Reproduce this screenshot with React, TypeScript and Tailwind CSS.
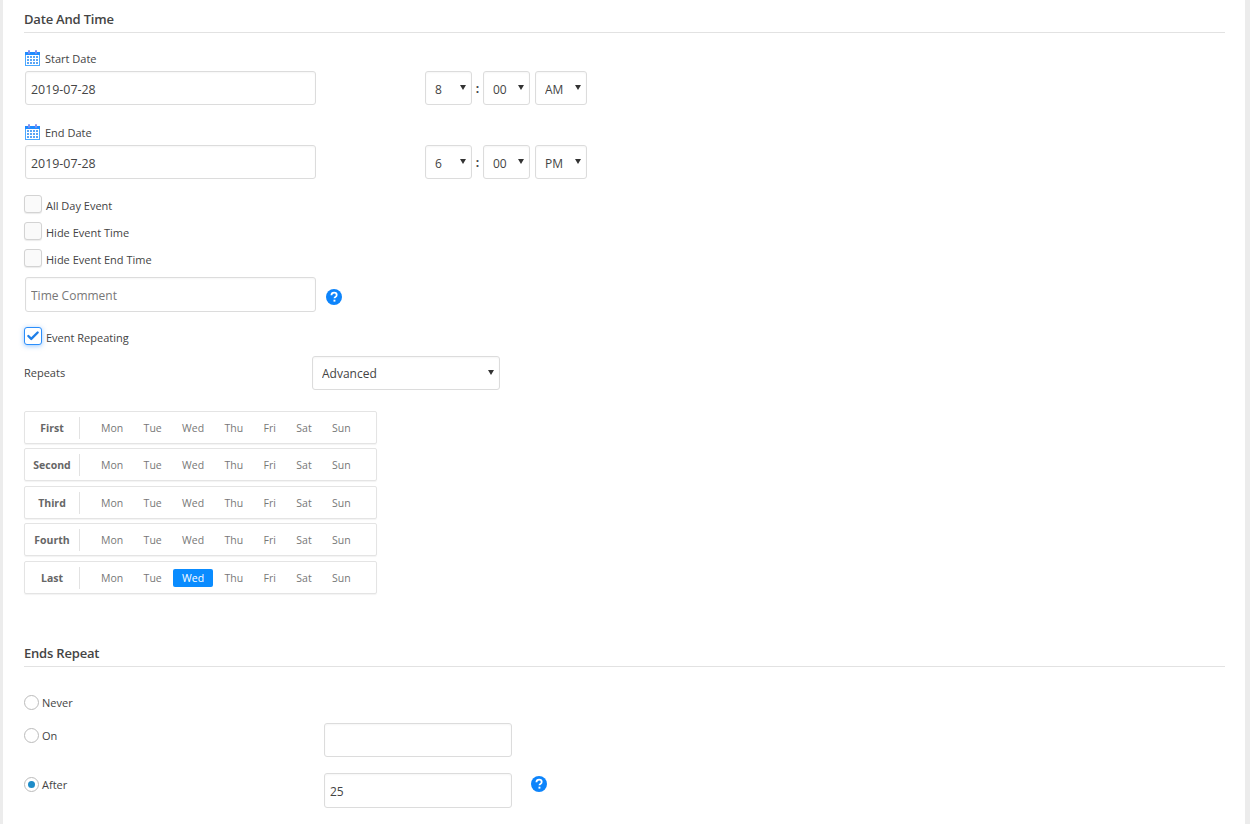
import { Check } from 'lucide-react';

const DAYS = ['Mon', 'Tue', 'Wed', 'Thu', 'Fri', 'Sat', 'Sun'];
const WEEKS = ['First', 'Second', 'Third', 'Fourth', 'Last'];

function CalendarIcon(): React.JSX.Element {
  return (
    <svg width="15" height="16" viewBox="0 0 15 16" className="shrink-0">
      <rect x="0.5" y="2.5" width="14" height="13" fill="#fff" stroke="#4aa8ff" />
      <rect x="0" y="2" width="15" height="3" fill="#1f8bff" />
      <rect x="3" y="0" width="2" height="4" rx="1" fill="#7f8ff0" />
      <rect x="10" y="0" width="2" height="4" rx="1" fill="#7f8ff0" />
      <path d="M2 6h2v2H2zM5 6h2v2H5zM8 6h2v2H8zM11 6h2v2h-2zM2 9h2v2H2zM5 9h2v2H5zM8 9h2v2H8zM11 9h2v2h-2zM2 12h2v2H2zM5 12h2v2H5zM8 12h2v2H8zM11 12h2v2h-2z" fill="#5aa5f5" />
    </svg>
  );
}

function HelpIcon(): React.JSX.Element {
  return (
    <svg width="16" height="16" viewBox="0 0 16 16" className="shrink-0">
      <circle cx="8" cy="8" r="8" fill="#0d84fb" />
      <path d="M5.4 6.2c.1-1.6 1.2-2.5 2.7-2.5s2.6.9 2.6 2.2c0 1-.5 1.5-1.3 2-.7.5-.9.7-.9 1.4" fill="none" stroke="#fff" strokeWidth="1.8" />
      <rect x="7.5" y="10.7" width="1.9" height="1.9" fill="#fff" />
    </svg>
  );
}

function Heading({ label }: { label: string }): React.JSX.Element {
  return (
    <h2 className="h-[33px] border-b border-[#e2e2e2] pt-[10px] text-[13px] leading-[18px] font-semibold tracking-[-0.015em] text-[#444]">
      {label}
    </h2>
  );
}

function TextInput({ value, placeholder, className }: { value?: string; placeholder?: string; className?: string }): React.JSX.Element {
  return (
    <input
      type="text"
      readOnly
      value={value ?? ''}
      placeholder={placeholder}
      className={`rounded-[3px] border border-[#dcdcdc] bg-white px-[5px] pt-[2px] text-xs text-[#444] shadow-[inset_0_1px_2px_rgba(0,0,0,0.04)] outline-none placeholder:text-[#777] ${className ?? ''}`}
    />
  );
}

function SelectBox({ value, className, selectClass = 'pt-[3px]' }: { value: string; className?: string; selectClass?: string }): React.JSX.Element {
  return (
    <div className={`relative h-[34px] rounded-[3px] border border-[#dcdcdc] bg-white shadow-[inset_0_1px_2px_rgba(0,0,0,0.04)] ${className ?? ''}`}>
      <select
        defaultValue={value}
        className={`h-full w-full appearance-none bg-transparent pl-[9px] text-xs text-[#444] outline-none ${selectClass}`}
      >
        <option>{value}</option>
      </select>
      <svg width="6" height="5" viewBox="0 0 6 5" className="pointer-events-none absolute top-[13px] right-[5px]">
        <path d="M0 0h6L3 5z" fill="#333" />
      </svg>
    </div>
  );
}

function DateField({ label, date, hour, ampm }: { label: string; date: string; hour: string; ampm: string }): React.JSX.Element {
  return (
    <div>
      <div className="flex h-[16px] items-center gap-[5px] pl-[1px] text-[11px] text-[#444]">
        <CalendarIcon />
        <span className="pt-[2px]">{label}</span>
      </div>
      <div className="mt-[5px] flex items-center pl-[1px]">
        <TextInput value={date} className="h-[34px] w-[291px] text-[12.4px]" />
        <SelectBox value={hour} className="ml-[109px] w-[47px]" />
        <span className="w-[11px] pt-[1px] text-center text-xs font-bold text-[#444]">:</span>
        <SelectBox value="00" className="w-[47px]" />
        <SelectBox value={ampm} className="ml-[5px] w-[52px]" />
      </div>
    </div>
  );
}

function CheckRow({ label, checked, className }: { label: string; checked?: boolean; className?: string }): React.JSX.Element {
  return (
    <label className={`flex h-[18px] items-center gap-[4px] text-[11px] text-[#444] ${className ?? ''}`}>
      <span
        className={
          checked
            ? 'flex size-[18px] items-center justify-center rounded-[3px] border border-[#2b8efb] bg-white shadow-[0_1px_5px_rgba(43,142,251,0.5)]'
            : 'size-[18px] rounded-[3px] border border-[#d3d3d3] bg-[#fafafa] shadow-[0_1px_1px_rgba(0,0,0,0.08)]'
        }
      >
        {checked && <Check size={14} strokeWidth={4} className="text-[#1f7fe8]" />}
      </span>
      <span className="pt-[5px]">{label}</span>
    </label>
  );
}

function WeekRow({ week, activeDay }: { week: string; activeDay?: string }): React.JSX.Element {
  return (
    <div className="flex h-[33px] w-[353px] items-center rounded-[2px] border border-[#e4e4e4] shadow-[0_1px_1px_rgba(0,0,0,0.05)] odd:mt-[5px] even:mt-[4px]">
      <div className="flex h-[22px] w-[55px] items-center justify-center border-r border-[#e2e2e2] pt-[3px] text-[10.5px] font-bold text-[#666]">
        {week}
      </div>
      <div className="ml-[12px] flex items-center gap-[2.4px]">
        {DAYS.map((day) => (
          <span
            key={day}
            className={
              day === activeDay
                ? 'rounded-[2px] bg-[#0a8cff] px-[9px] py-[2px] text-[10.5px] leading-[14px] text-white'
                : 'rounded-[2px] px-[9px] py-[2px] text-[10.5px] leading-[14px] text-[#777]'
            }
          >
            {day}
          </span>
        ))}
      </div>
    </div>
  );
}

function RadioRow({ label, checked, className }: { label: string; checked?: boolean; className?: string }): React.JSX.Element {
  return (
    <label className={`flex items-center gap-[3px] text-[11px] text-[#444] ${className ?? ''}`}>
      <span className="flex size-[15px] items-center justify-center rounded-full border border-[#bbb] bg-white">
        {checked && <span className="size-[7px] rounded-full bg-[#1e8cc8]" />}
      </span>
      <span className="pt-[1px]">{label}</span>
    </label>
  );
}

export default function App(): React.JSX.Element {
  return (
    <div className="h-screen overflow-hidden border-r-[5px] border-l-[3px] border-[#ececec] bg-white pr-[20px] pl-[21px] font-['Open_Sans',sans-serif]">
      <Heading label="Date And Time" />
      <div className="mt-[17px]">
        <DateField label="Start Date" date="2019-07-28" hour="8" ampm="AM" />
      </div>
      <div className="mt-[19px]">
        <DateField label="End Date" date="2019-07-28" hour="6" ampm="PM" />
      </div>
      <CheckRow label="All Day Event" className="mt-[16px]" />
      <CheckRow label="Hide Event Time" className="mt-[9px]" />
      <CheckRow label="Hide Event End Time" className="mt-[9px]" />
      <div className="mt-[10px] flex items-center pl-[1px]">
        <TextInput placeholder="Time Comment" className="h-[35px] w-[291px]" />
        <span className="mt-[5px] ml-[10px]">
          <HelpIcon />
        </span>
      </div>
      <CheckRow label="Event Repeating" checked className="mt-[15px]" />
      <div className="mt-[11px] flex h-[34px] items-center">
        <span className="w-[288px] text-[11px] text-[#444]">Repeats</span>
        <SelectBox value="Advanced" selectClass="pt-[1px]" className="w-[188px]" />
      </div>
      <div className="mt-[16px] flex flex-col">
        {WEEKS.map((week) => (
          <WeekRow key={week} week={week} activeDay={week === 'Last' ? 'Wed' : undefined} />
        ))}
      </div>
      <div className="mt-[40px]">
        <Heading label="Ends Repeat" />
      </div>
      <RadioRow label="Never" className="mt-[27px]" />
      <div className="mt-[11px] flex items-start">
        <RadioRow label="On" className="mt-[4px] w-[300px]" />
        <TextInput className="h-[34px] w-[188px]" />
      </div>
      <div className="mt-[16px] flex items-start">
        <RadioRow label="After" checked className="mt-[3px] w-[300px]" />
        <TextInput value="25" className="h-[35px] w-[188px]" />
        <span className="mt-[3px] ml-[19px]">
          <HelpIcon />
        </span>
      </div>
    </div>
  );
}
